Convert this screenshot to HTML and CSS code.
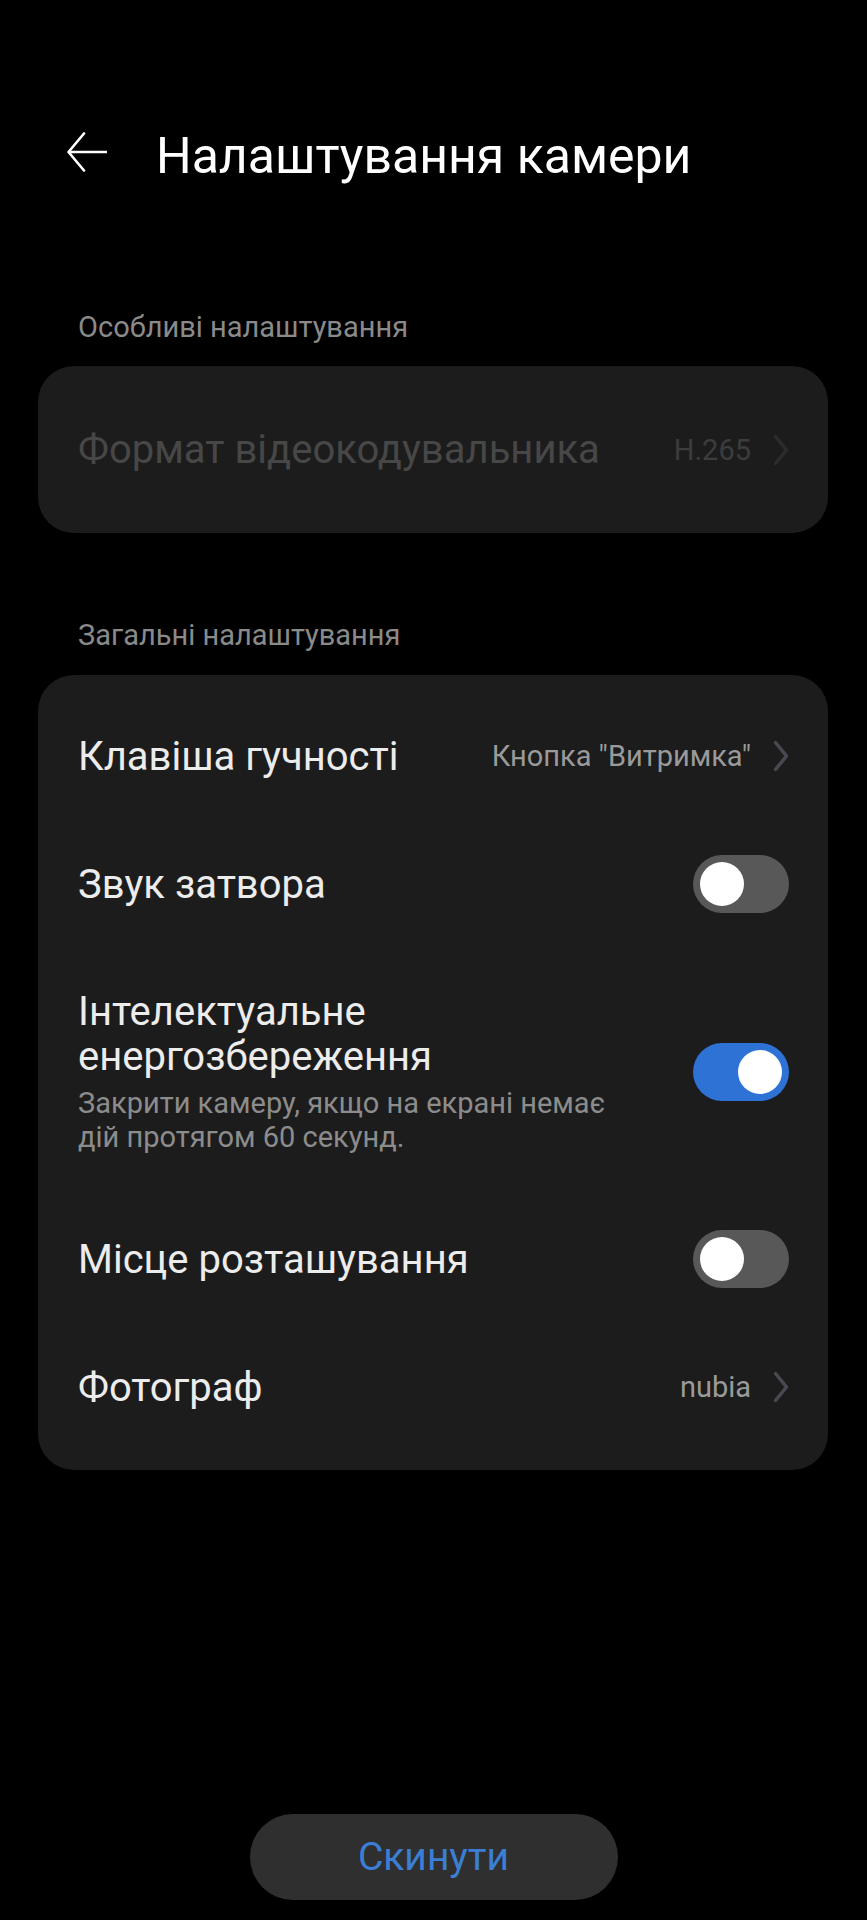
FILE: index.html
```html
<!DOCTYPE html>
<html lang="uk">

<head>
    <meta charset="UTF-8">
    <meta name="viewport" content="width=device-width, initial-scale=1.0">
    <title>Налаштування камери</title>
    <link rel="stylesheet" href="styles.css">
</head>

<body>
    <div class="page">
        <div class="header">
            <svg class="back" width="40" height="40" viewBox="0 0 40 40">
                <path d="M40 20H2M17 1.5L1.5 20L17 38.5" fill="none" stroke="#fff" stroke-width="2.6" stroke-linecap="round" stroke-linejoin="round" />
            </svg>
            <h1 class="title">Налаштування камери</h1>
        </div>

        <div class="label first">Особливі налаштування</div>
        <div class="card card-single">
            <div class="row disabled">
                <div class="name">Формат відеокодувальника</div>
                <div class="value">H.265</div>
                <svg class="chevron" width="16" height="32" viewBox="0 0 16 32">
                    <path d="M2.5 2.5L13.5 16L2.5 29.5" fill="none" stroke="#2b2b30" stroke-width="3.5" stroke-linecap="round" stroke-linejoin="round" />
                </svg>
            </div>
        </div>

        <div class="label">Загальні налаштування</div>
        <div class="card">
            <div class="row">
                <div class="name">Клавіша гучності</div>
                <div class="value">Кнопка "Витримка"</div>
                <svg class="chevron" width="16" height="32" viewBox="0 0 16 32">
                    <path d="M2.5 2.5L13.5 16L2.5 29.5" fill="none" stroke="#4a4951" stroke-width="3.5" stroke-linecap="round" stroke-linejoin="round" />
                </svg>
            </div>
            <div class="row">
                <div class="name">Звук затвора</div>
                <div class="switch"><span class="knob"></span></div>
            </div>
            <div class="row row-tall">
                <div class="text">
                    <div class="name">Інтелектуальне енергозбереження</div>
                    <div class="desc">Закрити камеру, якщо на екрані немає дій протягом 60 секунд.</div>
                </div>
                <div class="switch on"><span class="knob"></span></div>
            </div>
            <div class="row">
                <div class="name">Місце розташування</div>
                <div class="switch"><span class="knob"></span></div>
            </div>
            <div class="row">
                <div class="name">Фотограф</div>
                <div class="value">nubia</div>
                <svg class="chevron" width="16" height="32" viewBox="0 0 16 32">
                    <path d="M2.5 2.5L13.5 16L2.5 29.5" fill="none" stroke="#4a4951" stroke-width="3.5" stroke-linecap="round" stroke-linejoin="round" />
                </svg>
            </div>
        </div>

        <div class="reset">Скинути</div>
    </div>
</body>

</html>
```

FILE: styles.css
```css
* {
    margin: 0;
    padding: 0;
    box-sizing: border-box;
}

body {
    background-color: #000;
    font-family: Roboto, "Noto Sans", sans-serif;
    color: #ececec;
}

.page {
    display: flex;
    flex-direction: column;
    min-height: 1920px;
}

/* header */
.header {
    display: flex;
    align-items: flex-start;
    height: 56px;
    margin-top: 128px;
    padding-left: 67px;
}

.back {
    margin-top: 4px;
    flex-shrink: 0;
}

.title {
    margin-left: 49px;
    font-size: 50px;
    line-height: 56px;
    font-weight: 400;
    color: #fff;
}

/* section labels */
.label {
    padding-left: 78px;
    font-size: 29px;
    line-height: 34px;
    color: #8a8a8a;
    margin-top: 85px;
}

.label.first {
    margin-top: 126px;
}

/* cards */
.card {
    margin: 23px 39px 0 38px;
    padding: 17px 39px 19px 40px;
    background-color: #1c1c1c;
    border-radius: 36px;
}

.card-single {
    margin-top: 22px;
    padding: 0 39px 0 40px;
}

.card-single .row {
    min-height: 167px;
}

.row {
    display: flex;
    align-items: center;
    min-height: 128px;
}

.row-tall {
    padding: 41px 0;
}

.name {
    font-size: 40px;
    line-height: 45px;
}

.text {
    flex: 1;
    max-width: 560px;
}

.desc {
    margin-top: 7px;
    font-size: 29px;
    line-height: 34px;
    color: #8c8c8c;
}

.value {
    margin-left: auto;
    margin-right: 22px;
    font-size: 29px;
    color: #9a9a9a;
}

.chevron {
    flex-shrink: 0;
}

.disabled .name {
    color: #474747;
}

.disabled .value {
    color: #3c3c3c;
}

/* switches */
.switch {
    margin-left: auto;
    display: flex;
    align-items: center;
    width: 96px;
    height: 58px;
    padding: 0 7px;
    border-radius: 29px;
    background-color: #585858;
    flex-shrink: 0;
}

.switch.on {
    justify-content: flex-end;
    background-color: #2d72d4;
}

.knob {
    width: 44px;
    height: 44px;
    border-radius: 50%;
    background-color: #fff;
}

/* bottom button */
.reset {
    align-self: center;
    margin-top: auto;
    margin-bottom: 20px;
    width: 368px;
    height: 86px;
    border-radius: 43px;
    background-color: #2f2f2f;
    color: #3b7fd4;
    font-size: 39px;
    line-height: 86px;
    text-align: center;
}
```
